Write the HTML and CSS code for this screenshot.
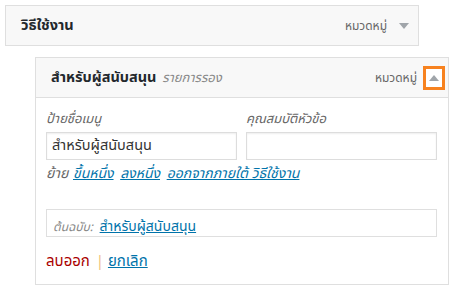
FILE: index.html
```html
<!DOCTYPE html>
<html lang="th">
<head>
  <meta charset="UTF-8">
  <title>เมนู</title>
  <link rel="stylesheet" href="styles.css">
</head>
<body>
  <ul class="menu">
    <li class="menu-item">
      <div class="item-bar">
        <span class="item-title">วิธีใช้งาน</span>
        <span class="item-controls">
          <span class="item-type">หมวดหมู่</span>
          <span class="item-edit"><span class="arrow down"></span></span>
        </span>
      </div>
    </li>
    <li class="menu-item sub-item open">
      <div class="item-bar">
        <span class="item-title">สำหรับผู้สนับสนุน <em class="sub-label">รายการรอง</em></span>
        <span class="item-controls">
          <span class="item-type">หมวดหมู่</span>
          <span class="item-edit active"><span class="arrow up"></span></span>
        </span>
      </div>
      <div class="item-settings">
        <div class="field-grid">
          <label class="field">
            <span class="field-label">ป้ายชื่อเมนู</span>
            <input type="text" value="สำหรับผู้สนับสนุน">
          </label>
          <label class="field">
            <span class="field-label">คุณสมบัติหัวข้อ</span>
            <input type="text" value="">
          </label>
        </div>
        <div class="move-row">
          <span class="move-label">ย้าย</span>
          <a href="#">ขึ้นหนึ่ง</a>
          <a href="#">ลงหนึ่ง</a>
          <a href="#">ออกจากภายใต้ วิธีใช้งาน</a>
        </div>
        <div class="original">
          <span class="original-label">ต้นฉบับ:</span>
          <a href="#">สำหรับผู้สนับสนุน</a>
        </div>
        <div class="actions">
          <a href="#" class="delete">ลบออก</a>
          <span class="sep">|</span>
          <a href="#" class="cancel">ยกเลิก</a>
        </div>
      </div>
    </li>
  </ul>
</body>
</html>
```

FILE: styles.css
```css
body {
  margin: 0;
  padding: 5px;
  background: #fff;
  font-family: Tahoma, "Noto Sans Thai", "Loma", "Garuda", "Noto Sans", sans-serif;
  font-size: 13px;
  color: #23282d;
}

.menu {
  list-style: none;
  margin: 0;
  padding: 0;
}

.menu-item {
  width: 414px;
  margin-bottom: 11px;
}

.sub-item {
  margin-left: 30px;
}

.item-bar {
  display: flex;
  justify-content: space-between;
  align-items: center;
  height: 39px;
  padding: 0 3px 0 15px;
  background: #f8f8f8;
  border: 1px solid #dfdfdf;
}

.item-title {
  font-weight: bold;
  font-size: 14.5px;
}

.sub-label {
  font-weight: normal;
  font-style: italic;
  font-size: 13px;
  color: #888;
  margin-left: 2px;
}

.item-controls {
  display: flex;
  align-items: center;
  gap: 6px;
  color: #666;
  font-size: 12px;
}

.item-edit {
  display: flex;
  justify-content: center;
  align-items: center;
  width: 22px;
  height: 24px;
  box-sizing: border-box;
}

.item-edit.active {
  border: 3px solid #f7821f;
  background: #fff;
}

.arrow {
  width: 0;
  height: 0;
  border-left: 5px solid transparent;
  border-right: 5px solid transparent;
}

.arrow.down {
  border-top: 6px solid #a0a5aa;
}

.arrow.up {
  border-bottom: 6px solid #a0a5aa;
}

.item-settings {
  border: 1px solid #dfdfdf;
  border-top: none;
  padding: 11px 11px 11px 10px;
  background: #fff;
}

.field-grid {
  display: grid;
  grid-template-columns: 191px 191px;
  gap: 9px;
}

.field {
  display: flex;
  flex-direction: column;
}

.field-label {
  font-style: italic;
  color: #666;
  margin-bottom: 3px;
}

.field input {
  height: 28px;
  box-sizing: border-box;
  border: 1px solid #ddd;
  padding: 2px 5px;
  font-family: inherit;
  font-size: 14.5px;
  color: #333;
  box-shadow: inset 0 1px 2px rgba(0, 0, 0, 0.07);
}

.move-row {
  margin-top: 3px;
  color: #666;
  font-size: 14px;
}

.move-label {
  font-style: italic;
  margin-right: 1px;
}

.move-row a {
  font-style: italic;
  margin-right: 3px;
}

a {
  color: #0073aa;
}

.original {
  margin-top: 25px;
  border: 1px solid #dfdfdf;
  padding: 6px 6px;
  height: 14px;
  font-size: 14px;
}

.original-label {
  font-style: italic;
  font-size: 12px;
  color: #888;
  margin-right: 3px;
}

.actions {
  margin-top: 13px;
  font-size: 15px;
}

.actions .delete {
  color: #a00;
  text-decoration: none;
}

.sep {
  color: #f0c27b;
  margin-left: 2px;
}
```
